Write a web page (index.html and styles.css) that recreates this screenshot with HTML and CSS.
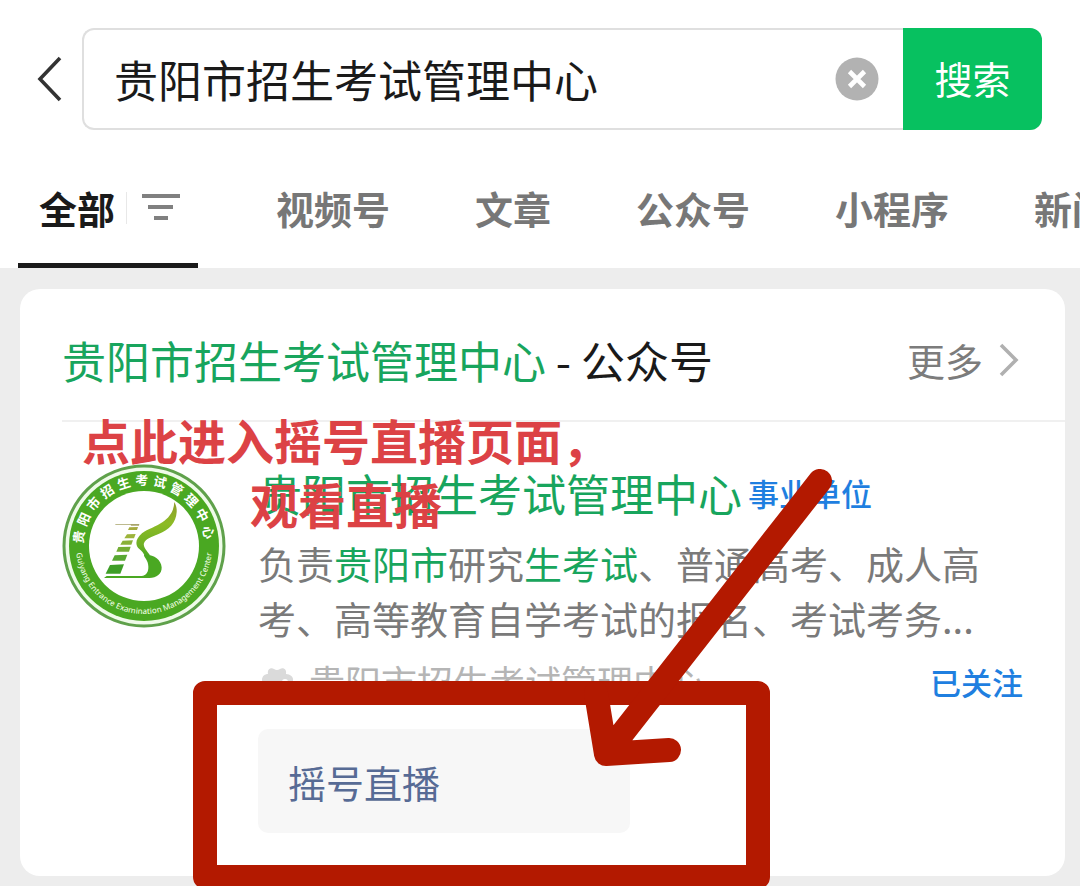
FILE: index.html
```html
<!DOCTYPE html>
<html lang="zh-CN">
<head>
<meta charset="utf-8">
<meta name="viewport" content="width=device-width, initial-scale=1">
<title>贵阳市招生考试管理中心 - 搜索</title>
<link rel="stylesheet" href="styles.css">
</head>
<body>
<header class="top">
  <div class="search-row">
    <button class="back" type="button" aria-label="返回">
      <svg width="26" height="46" viewBox="0 0 26 46" fill="none" stroke="#333" stroke-width="3.6"><path d="M24 2 4 23l20 21"/></svg>
    </button>
    <form class="search" role="search">
      <input class="search-input" type="text" aria-label="搜索内容" value="贵阳市招生考试管理中心">
      <button class="clear" type="button" aria-label="清除">
        <svg width="44" height="44" viewBox="0 0 44 44"><circle cx="22" cy="22" r="21.5" fill="#b2b2b2"/><path d="m14.500 14.500 15 15m0-15-15 15" stroke="#fff" stroke-width="4.600"/></svg>
      </button>
      <button class="submit" type="submit">搜索</button>
    </form>
  </div>
  <nav class="tabs">
    <a class="tab tab-active" href="#all">全部
      <svg class="filter" width="54" height="32" viewBox="0 0 54 32" fill="#808080"><path d="M0 0h1v32H0z" fill="#e8e8e8"/><path d="M16 2h38v4H16zM22 13h25v4H22zM28 24h14v4H28z"/></svg>
    </a>
    <a class="tab" href="#video">视频号</a>
    <a class="tab" href="#article">文章</a>
    <a class="tab" href="#official">公众号</a>
    <a class="tab" href="#mini">小程序</a>
    <a class="tab" href="#news">新闻</a>
  </nav>
</header>
<main class="results">
  <section class="card">
    <div class="card-head">
      <h1 class="card-title"><em>贵阳市招生考试管理中心</em> - 公众号</h1>
      <a class="more" href="#more">更多
        <svg width="20" height="34" viewBox="0 0 20 34" fill="none" stroke="#b0b0b0" stroke-width="3.600"><path d="m2 2 15 15L2 32"/></svg>
      </a>
    </div>
    <article class="account">
      <svg class="logo" viewBox="-82 -82 164 164" role="img" aria-label="贵阳市招生考试管理中心">
        <defs>
          <linearGradient id="leaf" x1="0" y1="0" x2="0" y2="1"><stop offset="0" stop-color="#8f9a2c"/><stop offset=".4" stop-color="#8dbb25"/><stop offset=".8" stop-color="#6fb025"/><stop offset="1" stop-color="#4aa822"/></linearGradient>
          <path id="arc" d="M-68 0A68 68 0 0 0 68 0"/>
        </defs>
        <circle r="80" fill="#effbe9" stroke="#5fa14b" stroke-width="3"/>
        <circle r="75" fill="#4aa822"/>
        <circle r="55" fill="#fff"/>
        <g class="logo-cn">
          <text y="-61" transform="rotate(-82)">贵</text><text y="-61" transform="rotate(-66)">阳</text><text y="-61" transform="rotate(-50)">市</text><text y="-61" transform="rotate(-34)">招</text><text y="-61" transform="rotate(-18)">生</text><text y="-61" transform="rotate(-2)">考</text><text y="-61" transform="rotate(14)">试</text><text y="-61" transform="rotate(30)">管</text><text y="-61" transform="rotate(46)">理</text><text y="-61" transform="rotate(62)">中</text><text y="-61" transform="rotate(78)">心</text>
        </g>
        <text class="logo-en"><textPath href="#arc" startOffset="50%">Guiyang Entrance Examination Management Center</textPath></text>
        <g transform="translate(-50 -50) scale(.3333)">
          <path fill="url(#leaf)" d="M241 18C240 42 230 62 205 79C190 90 160 100 144 112C124 129 122 148 137 160C144 166 149 172 152 179L168 178C156 162 147 151 150 142C154 130 171 123 192 115C225 102 246 81 248 49C249 37 246 26 241 18Z"/>
          <path d="M150 177C177 174 201 190 203 214C204 234 188 246 166 246H30L38 240H143C157 239 164 228 163 211C163 193 150 184 150 177Z" fill="#4aa822"/>
          <path d="M64 84h72l-1 5h-24l-1-3H64z" fill="#a8a46a"/>
          <path d="m106 94 26-1-3 9h-27z" fill="#a6ab3f"/>
          <path d="m99 115 26-1-5 13H91z" fill="#9db43b"/>
          <path d="m86 134 31-1-5 13H79z" fill="#89b138"/>
          <path d="m73 153 37-1-5 15H67z" fill="#74ad35"/>
          <path d="m62 178 38-2-7 18H54z" fill="#58a832"/>
          <path d="m48 207 42-2-11 28H35z" fill="#3e9e27"/>
        </g>
      </svg>
      <div class="info">
        <h2 class="name"><em>贵阳市招生考试管理中心</em><span class="tag">事业单位</span></h2>
        <p class="desc">负责<em>贵阳市</em>研究<em>生考试</em>、普通高考、成人高<br>考、高等教育自学考试的报名、考试考务...</p>
        <div class="source-row">
          <span class="source">
            <svg width="36" height="32" viewBox="0 0 36 32" fill="#dadada"><path d="M4 15C4 11 7 9 10 9C9 4 13 2 16 4Q19 6 22 4C25 2 29 4 28 9C32 9 36 12 35 16C33 19 30 21 31 25C27 31 9 31 6 25C7 20 4 18 4 15Z"/><circle cx="27" cy="17" r="3" fill="#fff"/></svg>
            贵阳市招生考试管理中心
          </span>
          <button class="followed" type="button">已关注</button>
        </div>
        <a class="live" href="#live">摇号直播</a>
      </div>
    </article>
    <p class="note">点此进入摇号直播页面，<span class="note-second">观看直播</span></p>
    <svg class="mark" width="652" height="420" viewBox="0 0 652 420" fill="none" stroke="#b31900" stroke-width="24" stroke-linejoin="round" stroke-linecap="round" aria-hidden="true">
      <path d="M12 224H565V408H12Z"/>
      <path d="M627 12 414 284M403 224 413 285 476 281"/>
    </svg>
  </section>
</main>
</body>
</html>
```
FILE: styles.css
```css
* { box-sizing: border-box; }
body {
  margin: 0;
  background: #ededed;
  color: #1a1a1a;
  font-family: "Noto Sans CJK SC", sans-serif;
  overflow-x: hidden;
}
h1, h2, p { margin: 0; font-weight: 400; }
em { font-style: normal; color: #18a55d; }
a { color: inherit; text-decoration: none; }
button { border: 0; padding: 0; background: none; font: inherit; cursor: pointer; }
svg { display: block; flex: none; }

.top { background: #fff; padding-top: 28px; }
.search-row { display: flex; align-items: center; padding-right: 38px; }
.back { width: 82px; padding-left: 36px; }
.search {
  flex: 1;
  min-width: 0;
  display: flex;
  align-items: center;
  height: 102px;
  border: 2px solid #dfdfdf;
  border-right: 0;
  border-radius: 12px;
}
.search-input {
  flex: 1;
  min-width: 0;
  border: 0;
  outline: 0;
  padding: 0 0 0 30px;
  background: none;
  color: #1a1a1a;
  font: 44px/64px "Noto Sans CJK SC", sans-serif;
}
.clear { margin-right: 24px; }
.submit {
  align-self: stretch;
  width: 139px;
  margin: -2px 0;
  padding-bottom: 4px;
  border-radius: 0 12px 12px 0;
  background: #07c160;
  color: #fff;
  font-size: 38px;
}
.tabs {
  display: flex;
  gap: 85px;
  height: 138px;
  padding-left: 18px;
  overflow: hidden;
}
.tab {
  flex: none;
  display: flex;
  align-items: center;
  padding-top: 22px;
  border-bottom: 5px solid transparent;
  color: #777;
  font-size: 38px;
  line-height: 56px;
  font-weight: 700;
  white-space: nowrap;
}
.tab-active {
  margin-right: -7px;
  padding-left: 21px;
  padding-right: 18px;
  border-color: #1a1a1a;
  color: #1a1a1a;
}
.filter { margin-left: 11px; }

.results { padding: 21px 15px 10px 20px; }
.card {
  position: relative;
  background: #fff;
  border-radius: 20px;
  padding-left: 42px;
}
.card-head {
  display: flex;
  justify-content: space-between;
  align-items: center;
  height: 133px;
  padding: 10px 46px 0 0;
  border-bottom: 2px solid #f0f0f0;
}
.card-title { font-size: 44px; line-height: 64px; }
.more {
  display: flex;
  align-items: center;
  gap: 16px;
  color: #7c7c7c;
  font-size: 38px;
}
.account { display: flex; gap: 32px; padding: 42px 42px 43px 0; }
.logo { width: 164px; height: 164px; }
.logo-cn { fill: #fff; font-size: 13px; font-weight: 700; text-anchor: middle; }
.logo-en { fill: #e6f8dc; font: 500 8px "Noto Sans", sans-serif; text-anchor: middle; }
.info { flex: 1; min-width: 0; margin-top: -3px; }
.name { display: flex; align-items: center; gap: 6px; font-size: 44px; line-height: 64px; }
.tag { color: #1f7fe0; font-size: 31px; font-weight: 500; }
.desc {
  margin-top: 10px;
  color: #7a7a7a;
  font-size: 38px;
  line-height: 55px;
  white-space: nowrap;
}
.source-row { display: flex; justify-content: space-between; align-items: center; margin-top: 8px; }
.source {
  display: flex;
  align-items: center;
  gap: 15px;
  color: #b5b5b5;
  font-size: 36px;
  line-height: 56px;
}
.followed { color: #1f7fe0; font-size: 31px; font-weight: 500; }
.live {
  display: flex;
  align-items: center;
  width: 372px;
  height: 104px;
  margin-top: 20px;
  padding-left: 30px;
  border-radius: 10px;
  background: #f7f7f7;
  color: #576b95;
  font-size: 38px;
}
.note {
  position: absolute;
  left: 62px;
  top: 118px;
  color: #dc4245;
  font-size: 48px;
  line-height: 64px;
  font-weight: 700;
  white-space: nowrap;
}
.note-second { display: block; padding-left: 168px; }
.mark { position: absolute; left: 173px; top: 180px; }
```
